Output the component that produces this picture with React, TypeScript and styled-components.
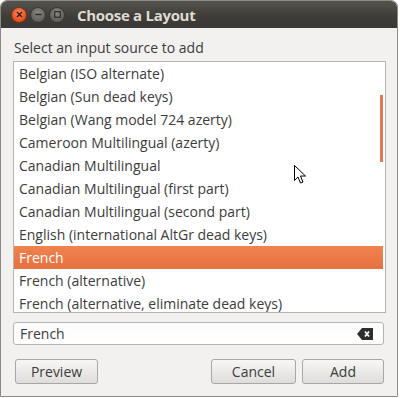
import React from "react";
import styled, { createGlobalStyle } from "styled-components";

const Global = createGlobalStyle`
  html, body { margin: 0; padding: 0; background: #ffffff; }
  body { width: 400px; height: 398px; overflow: hidden; font-family: "Open Sans", "Noto Sans", sans-serif; }
`;

const Window = styled.div`
  position: relative;
  width: 398px;
  height: 397px;
  box-sizing: border-box;
  border: 1px solid #8c8a85;
  border-radius: 7px 7px 0 0;
  background: #f2f1f0;
  display: flex;
  flex-direction: column;
  overflow: hidden;
`;

const TitleBar = styled.div`
  height: 27px;
  flex: none;
  background: linear-gradient(#55534d, #3d3c38 60%, #3a3935);
  display: flex;
  align-items: center;
  padding-left: 10px;
  gap: 3px;
`;

const Circle = styled.div<{ $close?: boolean }>`
  width: 16px;
  height: 16px;
  border-radius: 50%;
  box-sizing: border-box;
  border: 1px solid ${(p) => (p.$close ? "#8a2c10" : "#3a3935")};
  background: ${(p) =>
    p.$close
      ? "radial-gradient(circle at 50% 35%, #f78a5c, #e2501e 70%)"
      : "radial-gradient(circle at 50% 35%, #8a8882, #5f5d58 75%)"};
  display: flex;
  align-items: center;
  justify-content: center;
`;

const Title = styled.div`
  margin-left: 9px;
  color: #dfdbd2;
  font-weight: 700;
  font-size: 15px;
  letter-spacing: -0.3px;
`;

const Body = styled.div`
  flex: 1;
  display: flex;
  flex-direction: column;
  padding: 10px 10px 0 12px;
`;

const Label = styled.div`
  color: #3c3c3c;
  font-size: 14px;
  line-height: 20px;
  margin-left: 1px;
  margin-bottom: 3px;
`;

const ListBox = styled.div`
  position: relative;
  height: 252px;
  box-sizing: border-box;
  border: 1px solid #b6b4b1;
  background: #ffffff;
  overflow: hidden;
  margin-right: 1px;
`;

const Row = styled.div<{ $selected?: boolean }>`
  height: 23px;
  line-height: 23px;
  padding-left: 5px;
  margin-right: 2px;
  font-size: 14px;
  color: ${(p) => (p.$selected ? "#ffffff" : "#3c3c3c")};
  background: ${(p) => (p.$selected ? "linear-gradient(#f0834f, #e6703f)" : "transparent")};
  white-space: nowrap;
`;

const ScrollIndicator = styled.div`
  position: absolute;
  right: 2px;
  top: 33px;
  width: 3px;
  height: 67px;
  background: #e17a4e;
`;

const Entry = styled.div`
  margin-top: 9px;
  height: 23px;
  box-sizing: border-box;
  border: 1px solid #b6b4b1;
  border-radius: 3px;
  background: linear-gradient(#fbfbfb, #ffffff);
  display: flex;
  align-items: center;
  justify-content: space-between;
  padding: 0 10px 0 6px;
  margin-right: 3px;
  font-size: 14px;
  color: #3c3c3c;
`;

const Buttons = styled.div`
  margin-top: 14px;
  display: flex;
  align-items: center;
  margin-left: 2px;
  margin-right: 3px;
`;

const Button = styled.div<{ $w: number }>`
  width: ${(p) => p.$w}px;
  height: 25px;
  box-sizing: border-box;
  border: 1px solid #a9a7a4;
  border-radius: 3px;
  background: linear-gradient(#f7f7f6, #dedddb);
  display: flex;
  align-items: center;
  justify-content: center;
  font-size: 14px;
  color: #3c3c3c;
`;

const Spacer = styled.div`
  flex: 1;
`;

const Gap = styled.div`
  width: 6px;
`;

const Cursor = styled.svg`
  position: absolute;
  left: 293px;
  top: 164px;
`;

const items = [
  "Belgian (ISO alternate)",
  "Belgian (Sun dead keys)",
  "Belgian (Wang model 724 azerty)",
  "Cameroon Multilingual (azerty)",
  "Canadian Multilingual",
  "Canadian Multilingual (first part)",
  "Canadian Multilingual (second part)",
  "English (international AltGr dead keys)",
  "French",
  "French (alternative)",
  "French (alternative, eliminate dead keys)",
];

export default function App() {
  return (
    <>
      <Global />
      <Window>
        <TitleBar>
          <Circle $close>
            <svg width="7" height="7" viewBox="0 0 7 7">
              <path d="M1 1L6 6M6 1L1 6" stroke="#3a1a0e" strokeWidth="1.4" />
            </svg>
          </Circle>
          <Circle>
            <svg width="7" height="7" viewBox="0 0 7 7">
              <path d="M0.5 3.5H6.5" stroke="#2e2d2a" strokeWidth="1.4" />
            </svg>
          </Circle>
          <Circle>
            <svg width="7" height="7" viewBox="0 0 7 7">
              <rect x="0.7" y="0.7" width="5.6" height="5.6" fill="none" stroke="#2e2d2a" strokeWidth="1.2" />
            </svg>
          </Circle>
          <Title>Choose a Layout</Title>
        </TitleBar>
        <Body>
          <Label>Select an input source to add</Label>
          <ListBox>
            {items.map((t) => (
              <Row key={t} $selected={t === "French"}>
                {t}
              </Row>
            ))}
            <ScrollIndicator />
          </ListBox>
          <Entry>
            <span>French</span>
            <svg width="16" height="12" viewBox="0 0 16 12">
              <path d="M5 0H16V12H5L0 6Z" fill="#2e2e2e" />
              <path d="M8 3.5L12 8.5M12 3.5L8 8.5" stroke="#ffffff" strokeWidth="1.8" />
            </svg>
          </Entry>
          <Buttons>
            <Button $w={83}>Preview</Button>
            <Spacer />
            <Button $w={85}>Cancel</Button>
            <Gap />
            <Button $w={82}>Add</Button>
          </Buttons>
        </Body>
        <Cursor width="13" height="20" viewBox="0 0 13 20">
          <path d="M0.5 0.5V15.5L4 12L6.5 18L9 17L6.5 11H11.5Z" fill="#ffffff" stroke="#000000" strokeWidth="1" />
        </Cursor>
      </Window>
    </>
  );
}
